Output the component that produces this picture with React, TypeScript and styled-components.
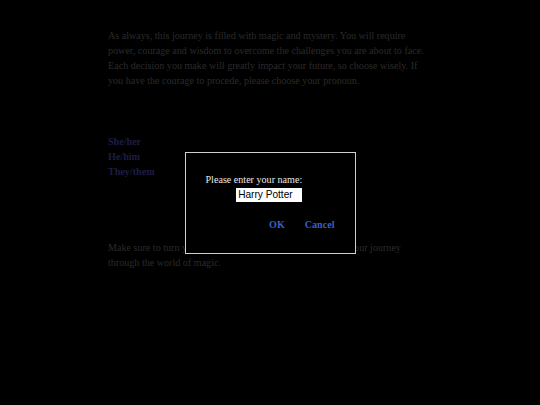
import { createGlobalStyle, styled } from 'styled-components';

const GlobalStyles = createGlobalStyle`
  html, body {
    margin: 0;
    padding: 0;
    background: #000;
    height: 100%;
  }
  body {
    font-family: "Liberation Serif", "Times New Roman", serif;
  }
`;

function App() {
  return (
    <>
      <GlobalStyles />
      <Page>
        <Story>
          As always, this journey is filled with magic and mystery. You will require power, courage
          and wisdom to overcome the challenges you are about to face. Each decision you make will
          greatly impact your future, so choose wisely. If you have the courage to procede, please
          choose your pronoun.
        </Story>
        <Choices>
          <Choice href="#">She/her</Choice>
          <Choice href="#">He/him</Choice>
          <Choice href="#">They/them</Choice>
        </Choices>
        <Story>
          Make sure to turn your sound on for the best experience on your journey through the
          world of magic.
        </Story>
      </Page>
      <Overlay>
        <Dialog>
          <Prompt>
            <Label>Please enter your name:</Label>
            <NameInput defaultValue="Harry Potter" />
          </Prompt>
          <Actions>
            <ActionBtn>OK</ActionBtn>
            <ActionBtn>Cancel</ActionBtn>
          </Actions>
        </Dialog>
      </Overlay>
    </>
  );
}

export const Page = styled.div`
  width: 322px;
  padding: 28px 0 0 108px;
  display: flex;
  flex-direction: column;
`;

export const Story = styled.p`
  margin: 0;
  font-size: 10.1px;
  line-height: 15px;
  color: #2b2b2b;
`;

export const Choices = styled.div`
  display: flex;
  flex-direction: column;
  margin: 46px 0 61px;
`;

export const Choice = styled.a`
  font-size: 10.1px;
  line-height: 15px;
  font-weight: bold;
  color: #1d1d45;
  text-decoration: none;
`;

export const Overlay = styled.div`
  position: fixed;
  inset: 0;
  display: flex;
  align-items: center;
  justify-content: center;
`;

export const Dialog = styled.div`
  width: 169px;
  height: 100px;
  background: #000;
  border: 1px solid #cfcfcf;
  display: flex;
  flex-direction: column;
  box-sizing: content-box;
`;

export const Prompt = styled.div`
  margin: 20px 0 0 20px;
  align-self: flex-start;
  display: flex;
  flex-direction: column;
  align-items: flex-end;
  gap: 2px;
`;

export const Label = styled.div`
  font-size: 10.1px;
  line-height: 13px;
  color: #e8e8e8;
`;

export const NameInput = styled.input`
  width: 66px;
  height: 14px;
  box-sizing: border-box;
  border: none;
  padding: 0 2px;
  font-family: "Liberation Sans", Arial, sans-serif;
  font-size: 10.1px;
  color: #000;
  background: #fff;
  outline: none;
`;

export const Actions = styled.div`
  margin-top: 17px;
  align-self: flex-end;
  margin-right: 20px;
  display: flex;
  gap: 20px;
`;

export const ActionBtn = styled.button`
  background: none;
  border: none;
  padding: 0;
  font-family: "Liberation Serif", "Times New Roman", serif;
  font-size: 10.1px;
  font-weight: bold;
  color: #3a5fc8;
  cursor: pointer;
`;

export default App;
